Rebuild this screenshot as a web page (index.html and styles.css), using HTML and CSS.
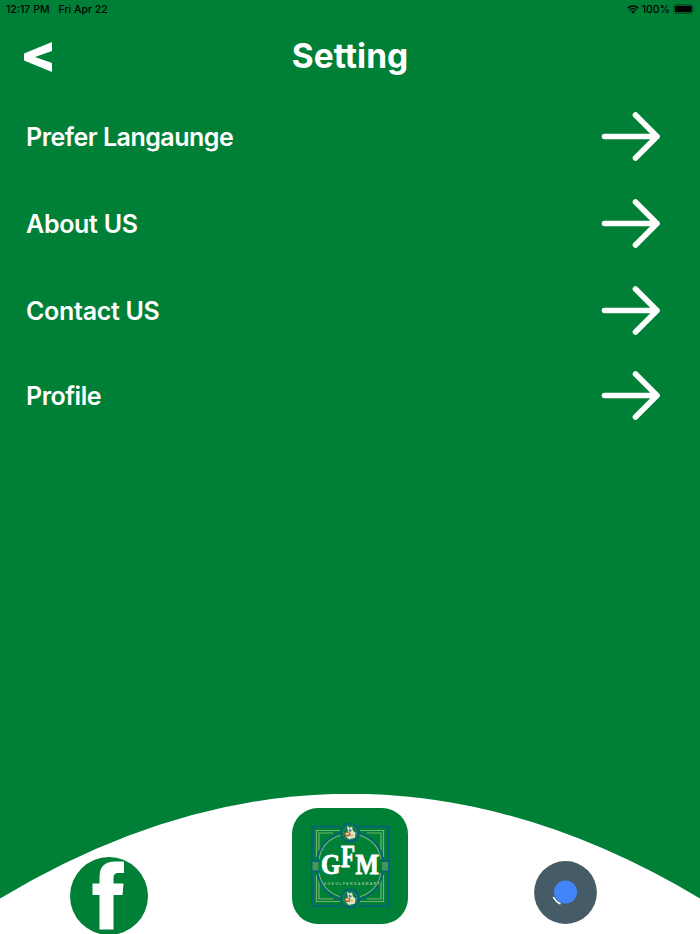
FILE: index.html
```html
<!DOCTYPE html>
<html lang="en">
<head>
    <meta charset="UTF-8">
    <meta name="viewport" content="width=device-width, initial-scale=1.0">
    <title>Setting</title>
    <link rel="stylesheet" href="styles.css">
</head>
<body>
    <svg width="0" height="0" class="sprite" aria-hidden="true">
        <symbol id="arrow" viewBox="0 0 60 50">
            <path d="M4.5 24.5H57M35.5 3L57 24.5L35.5 46" fill="none" stroke="#fff" stroke-width="5.6" stroke-linecap="round" stroke-linejoin="round"/>
        </symbol>
        <symbol id="medallion" viewBox="0 0 20 20">
            <circle cx="10" cy="10" r="9" fill="#087a43" stroke="#045f80" stroke-width="1.8"/>
            <circle cx="10" cy="10" r="6.8" fill="none" stroke="#63a66a" stroke-width="1" stroke-dasharray="1 1.6"/>
            <path d="M7 3L9.5 5L12 4L13 8L15.5 10L15 15L9 16.5L6 14L8 10Z" fill="#dfe5cf"/>
            <path d="M9 6L12 7.5L10.5 9.5L8.5 8.5Z" fill="#6b7c91"/>
            <ellipse cx="7.5" cy="11.5" rx="3" ry="2.2" fill="#b5652b"/>
            <ellipse cx="7.3" cy="11" rx="1.8" ry="1" fill="#f1d5a4"/>
            <path d="M11 11L13.5 12.5L11.5 14.5Z" fill="#e0b93c"/>
        </symbol>
    </svg>

    <div class="screen">
        <div class="status-bar">
            <div class="status-left">
                <span>12:17 PM</span>
                <span>Fri Apr 22</span>
            </div>
            <div class="status-right">
                <svg class="wifi" viewBox="0 0 12 9">
                    <path d="M.8 3.2A7.4 7.4 0 0 1 11.2 3.2M2.7 5.2A4.7 4.7 0 0 1 9.3 5.2" fill="none" stroke="#000" stroke-width="1.5"/>
                    <path d="M6 8.8L4.1 6.8A2.7 2.7 0 0 1 7.9 6.8Z" fill="#000"/>
                </svg>
                <span class="percent">100%</span>
                <svg class="battery" viewBox="0 0 23 10">
                    <rect x=".5" y=".5" width="19.6" height="9" rx="2.6" fill="none" stroke="#00501f"/>
                    <rect x="1.8" y="1.7" width="17" height="6.6" rx="1.3" fill="#000"/>
                    <path d="M21.2 3.5Q22.5 5 21.2 6.5Z" fill="#00501f"/>
                </svg>
            </div>
        </div>

        <header class="header">
            <svg class="back" viewBox="0 0 28 30">
                <path d="M28 0V9L11 15L28 21V30L0 18.5V11.5Z" fill="#fff"/>
            </svg>
            <h1>Setting</h1>
        </header>

        <main class="menu">
            <div class="menu-row long">
                <span>Prefer Langaunge</span>
                <svg class="arrow"><use href="#arrow"/></svg>
            </div>
            <div class="menu-row">
                <span>About US</span>
                <svg class="arrow"><use href="#arrow"/></svg>
            </div>
            <div class="menu-row">
                <span>Contact US</span>
                <svg class="arrow"><use href="#arrow"/></svg>
            </div>
            <div class="menu-row last">
                <span>Profile</span>
                <svg class="arrow"><use href="#arrow"/></svg>
            </div>
        </main>

        <footer class="footer">
            <svg class="curve" viewBox="0 0 700 140" preserveAspectRatio="none">
                <path d="M0 104.5Q350 -105 700 104.5V140H0Z" fill="#fff"/>
            </svg>
            <svg class="facebook" viewBox="0 0 78 78">
                <circle cx="39" cy="39" r="39" fill="#008037"/>
                <path d="M54 4.5V16H48Q43.5 16 43.5 21V26.5H53.5L52.5 38H43.5V72.5H29.5V38H22.5V26.5H29.5V20Q29.5 4.5 45 4.5Z" fill="#fff"/>
            </svg>
            <svg class="logo" viewBox="0 0 116 116">
                <rect width="116" height="116" rx="26" fill="#008037"/>
                <g fill="none" stroke="#73b36f" stroke-width="1.2">
                    <path d="M24.5 49V22.5H48M27 44V25H41M68 22.5H91.5V49M75 25H89V44"/>
                    <path d="M24.5 67V93.5H48M27 72V91H41M68 93.5H91.5V67M75 91H89V72"/>
                    <path d="M27 51Q30 33 49 27M89 51Q86 33 67 27M27 65Q30 83 49 89M89 65Q86 83 67 89"/>
                </g>
                <g fill="none" stroke="#045f80" stroke-width="1.7">
                    <path d="M48.5 18.5H20V98H48.5M67.5 18.5H96.5V98H67.5"/>
                    <path d="M25 53Q28 31 49 24.5M91 53Q88 31 67 24.5M25 63Q28 85 49 91.5M91 63Q88 85 67 91.5"/>
                    <path d="M19.5 53H27M19.5 63.5H27M89 53H97M89 63.5H97"/>
                </g>
                <rect x="20.5" y="54" width="6" height="8.5" fill="#46945a"/>
                <rect x="90" y="54" width="6" height="8.5" fill="#46945a"/>
                <use href="#medallion" x="48" y="14.7" width="20" height="20"/>
                <use href="#medallion" x="48" y="80.5" width="20" height="20"/>
                <g class="logo-letters">
                    <text x="29" y="65.5" font-size="29" textLength="19.5" lengthAdjust="spacingAndGlyphs">G</text>
                    <text x="49" y="59" font-size="31" textLength="14" lengthAdjust="spacingAndGlyphs">F</text>
                    <text x="63.5" y="65.5" font-size="29" textLength="23.5" lengthAdjust="spacingAndGlyphs">M</text>
                </g>
                <text class="logo-name" x="31.5" y="77" textLength="56">GOKULPARGANMART</text>
            </svg>
            <svg class="assist" viewBox="0 0 63 63">
                <circle cx="31.5" cy="31.5" r="31.4" fill="#455b65"/>
                <circle cx="31.5" cy="31" r="11.5" fill="#4285f8"/>
                <path d="M19.3 36Q21.5 40.5 26.5 43" fill="none" stroke="#fff" stroke-width="1.5"/>
            </svg>
        </footer>
    </div>
</body>
</html>
```

FILE: styles.css
```css
* {
    box-sizing: border-box;
}
body {
    margin: 0;
    background: #008037;
    font-family: Inter, Roboto, sans-serif;
    color: #fff;
}
svg {
    display: block;
    flex-shrink: 0;
}
.sprite {
    position: absolute;
}
.screen {
    display: flex;
    flex-direction: column;
    height: 934px;
    overflow: hidden;
}
.status-bar {
    display: flex;
    justify-content: space-between;
    align-items: center;
    height: 18px;
    padding: 0 5px 0 6px;
    color: #000;
    font-size: 10.5px;
    font-weight: 500;
}
.status-left {
    display: flex;
    gap: 9px;
}
.status-right {
    display: flex;
    align-items: center;
}
.wifi {
    width: 12px;
    height: 9px;
    margin-right: 3px;
}
.percent {
    margin-right: 3px;
}
.battery {
    width: 23px;
    height: 10px;
    margin-right: -1px;
}
.header {
    display: grid;
    grid-template-columns: 28px 1fr 28px;
    align-items: center;
    height: 76px;
    padding: 0 24px;
}
.back {
    width: 28px;
    height: 30px;
    margin-top: 2px;
}
h1 {
    margin: 0;
    font-size: 33.5px;
    font-weight: 700;
    line-height: 40px;
    text-align: center;
}
.menu {
    flex: 1;
    padding: 0 40px 0 26px;
}
.menu-row {
    display: flex;
    justify-content: space-between;
    align-items: center;
    height: 86.7px;
    font-size: 25px;
    font-weight: 600;
    letter-spacing: -0.3px;
}
.menu-row.long {
    letter-spacing: -0.5px;
}
.menu-row.last {
    height: 84px;
    letter-spacing: -0.5px;
}
.arrow {
    width: 60px;
    height: 50px;
}
.footer {
    position: relative;
    display: flex;
    justify-content: space-between;
    align-items: flex-start;
    height: 140px;
    padding: 0 103px 0 70px;
}
.curve {
    position: absolute;
    inset: 0;
    width: 100%;
    height: 100%;
}
.facebook,
.logo,
.assist {
    position: relative;
}
.facebook {
    width: 78px;
    height: 78px;
    margin-top: 63px;
}
.logo {
    width: 116px;
    height: 116px;
    margin: 14px 0 0 17px;
}
.logo-letters {
    fill: #fff;
    stroke: #fff;
    stroke-width: 0.9px;
    font-family: "Liberation Serif", serif;
    font-weight: 700;
}
.logo-name {
    fill: #8fc39b;
    font-family: "Liberation Sans", sans-serif;
    font-size: 3.5px;
    font-weight: 700;
}
.assist {
    width: 63px;
    height: 63px;
    margin-top: 67px;
}
```
